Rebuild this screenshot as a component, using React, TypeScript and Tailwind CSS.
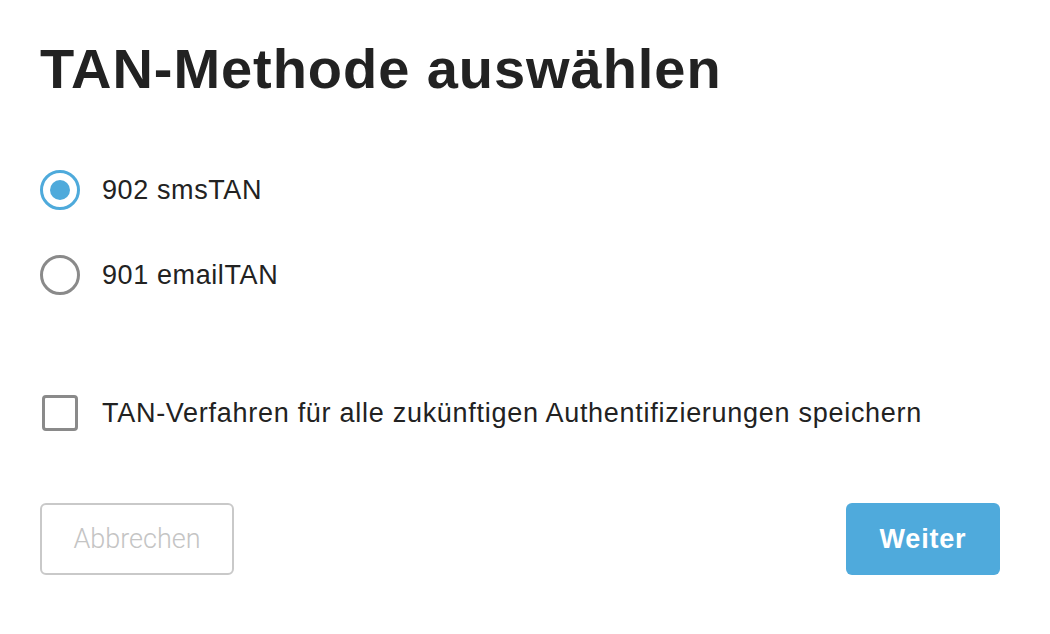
import React from "react";

const font = { fontFamily: '"Liberation Sans", Arial, Helvetica, sans-serif' };

export default function App() {
  return (
    <div
      className="w-[1050px] h-[634px] bg-white text-[#222222] pl-[40px] pr-[50px] pt-[41px] flex flex-col"
      style={font}
    >
      <h1 className="text-[56px] leading-[56px] font-bold tracking-[0.95px] text-[#222222]">
        TAN-Methode auswählen
      </h1>

      <div className="mt-[73px] flex flex-col gap-[45px]">
        <label className="flex items-center h-[40px]">
          <span className="w-[40px] h-[40px] rounded-full border-[3px] border-[#4eaadb] flex items-center justify-center shrink-0">
            <span className="w-[20px] h-[20px] rounded-full bg-[#4eaadb]" />
          </span>
          <span className="ml-[22px] text-[27px] leading-[40px] tracking-[0.6px]">902 smsTAN</span>
        </label>
        <label className="flex items-center h-[40px]">
          <span className="w-[40px] h-[40px] rounded-full border-[3px] border-[#8a8a8a] shrink-0" />
          <span className="ml-[22px] text-[27px] leading-[40px] tracking-[0.6px]">901 emailTAN</span>
        </label>
      </div>

      <label className="mt-[98px] flex items-center h-[40px]">
        <span className="ml-[2px] w-[36px] h-[36px] rounded-[4px] border-[3px] border-[#8a8a8a] shrink-0" />
        <span className="ml-[24px] text-[27px] leading-[40px] tracking-[0.72px]">
          TAN-Verfahren für alle zukünftigen Authentifizierungen speichern
        </span>
      </label>

      <div className="mt-[70px] flex justify-between items-start">
        <button
          className="w-[194px] h-[72px] rounded-[6px] border-2 border-[#c9c9c9] bg-white text-[#c4c4c4] text-[27px] font-light flex items-center justify-center"
          style={{ fontFamily: 'Roboto, "Liberation Sans", sans-serif' }}
        >
          Abbrechen
        </button>
        <button className="w-[154px] h-[72px] rounded-[6px] bg-[#4faadc] text-white text-[27px] font-bold tracking-[0.8px] flex items-center justify-center">
          Weiter
        </button>
      </div>
    </div>
  );
}
